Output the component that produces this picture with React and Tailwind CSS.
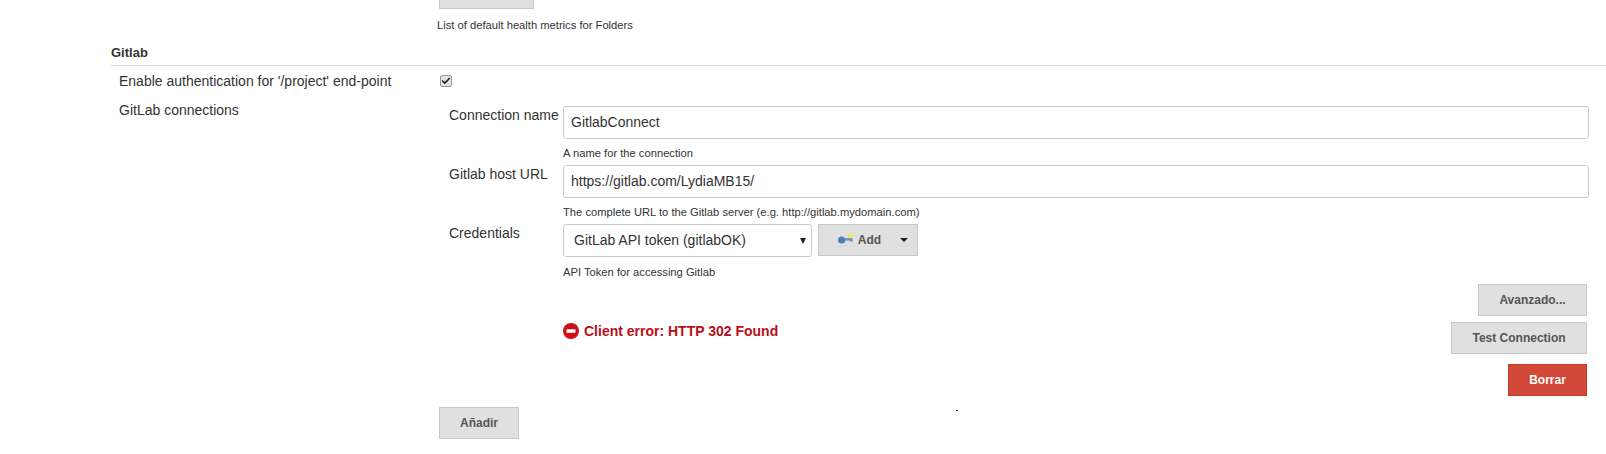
import { Check } from "lucide-react";

const buttonCls =
  "flex h-8 items-center justify-center border text-[12px] font-bold";
const grayCls = "border-[#c8c8c8] bg-[#e0e0e0] text-[#555]";

function Help({ children, className = "" }) {
  return <div className={`text-[11.2px] leading-4 text-[#333] ${className}`}>{children}</div>;
}

function KeyIcon() {
  return (
    <svg width="15" height="14" viewBox="0 0 15 14" className="shrink-0">
      <circle cx="12" cy="2.6" r="2.6" fill="#f2e26c" />
      <circle cx="3.6" cy="7" r="3.6" fill="#4a7fb5" />
      <path d="M6 5.2H14.5V8.6H12V7.6H6Z" fill="#5f8fbe" />
      <rect x="2" y="12.5" width="8" height="1" fill="#cfd3d8" />
    </svg>
  );
}

function ErrorIcon() {
  return (
    <svg width="16" height="16" viewBox="0 0 16 16" className="shrink-0">
      <circle cx="8" cy="8" r="8" fill="#cc0f16" />
      <rect x="3.5" y="6.2" width="9" height="3.6" rx="0.6" fill="#fff" />
    </svg>
  );
}

function ConnectionRow({ label, value, help }) {
  return (
    <div className="flex">
      <div className="w-[124px] shrink-0 whitespace-nowrap pl-[10px] text-[14px] leading-[18px]">{label}</div>
      <div className="flex-1">
        <input
          readOnly
          value={value}
          className="block h-[33px] w-full rounded-[3px] border border-[#ccc] bg-white px-[7px] pb-[2px] text-[14px] text-[#333] outline-none"
        />
        <Help className="mt-[6px] h-[20px]">{help}</Help>
      </div>
    </div>
  );
}

export default function App() {
  return (
    <div className="h-[454px] w-full overflow-hidden bg-white font-['Liberation_Sans',Arial,sans-serif] text-[#333]">
      <div className="ml-[439px] h-[9px] w-[95px] border border-t-0 border-[#c8c8c8] bg-[#e0e0e0]" />
      <Help className="ml-[437px] mt-[8px]">List of default health metrics for Folders</Help>

      <div className="ml-[111px] mt-[11px] border-b border-[#ddd] pb-[3px] text-[13px] leading-[18px] font-bold">
        Gitlab
      </div>

      <div className="ml-[119px] mt-[6px] flex h-[18px] items-center">
        <div className="w-[321px] shrink-0 text-[14px] leading-[18px]">
          Enable authentication for '/project' end-point
        </div>
        <div className="relative h-3 w-3">
          <input
            type="checkbox"
            readOnly
            checked
            className="block h-3 w-3 appearance-none rounded-[2px] border border-[#999] bg-[#e4e4e4]"
          />
          <Check size={10} strokeWidth={4} className="absolute left-[1px] top-[1px] text-[#222]" />
        </div>
      </div>

      <div className="ml-[119px] mt-[11px] flex">
        <div className="w-[320px] shrink-0 text-[14px] leading-[18px]">GitLab connections</div>

        <div className="mr-[17px] mt-[5px] flex-1">
          <ConnectionRow label="Connection name" value="GitlabConnect" help="A name for the connection" />
          <ConnectionRow
            label="Gitlab host URL"
            value="https://gitlab.com/LydiaMB15/"
            help="The complete URL to the Gitlab server (e.g. http://gitlab.mydomain.com)"
          />

          <div className="flex">
            <div className="w-[124px] shrink-0 pl-[10px] text-[14px] leading-[18px]">Credentials</div>
            <div className="flex-1">
              <div className="flex gap-[6px]">
                <div className="flex h-[33px] w-[249px] items-center justify-between rounded-[3px] border border-[#ccc] bg-white pl-[10px] pr-[5px] text-[14px]">
                  <span>GitLab API token (gitlabOK)</span>
                  <span className="h-0 w-0 border-x-[3px] border-t-[6px] border-x-transparent border-t-[#222]" />
                </div>
                <div className={`${buttonCls} ${grayCls} w-[100px] gap-[5px] pl-[10px]`}>
                  <KeyIcon />
                  <span>Add</span>
                  <span className="ml-[14px] h-0 w-0 border-x-[4px] border-t-[4px] border-x-transparent border-t-[#222]" />
                </div>
              </div>
              <Help className="mt-[7px]">API Token for accessing Gitlab</Help>
            </div>
          </div>

          <div className="mt-[4px] flex justify-between pl-[124px] pr-[2px]">
            <div className="mt-[39px] flex h-[16px] items-center gap-[5px] text-[14px] font-bold text-[#b80f16]">
              <ErrorIcon />
              <span>Client error: HTTP 302 Found</span>
            </div>
            <div className="flex flex-col items-end">
              <div className={`${buttonCls} ${grayCls} w-[109px]`}>Avanzado...</div>
              <div className={`${buttonCls} ${grayCls} mt-[6px] w-[136px]`}>Test Connection</div>
              <div className={`${buttonCls} mt-[10px] w-[79px] border-[#c0392b] bg-[#d24939] text-white`}>Borrar</div>
            </div>
          </div>
        </div>
      </div>

      <div className="ml-[439px] mt-[11px] flex items-start">
        <div className={`${buttonCls} ${grayCls} w-[80px]`}>Añadir</div>
        <span className="ml-[437px] mt-[3px] h-[1px] w-[2px] bg-[#2a2a90]" />
      </div>
    </div>
  );
}
